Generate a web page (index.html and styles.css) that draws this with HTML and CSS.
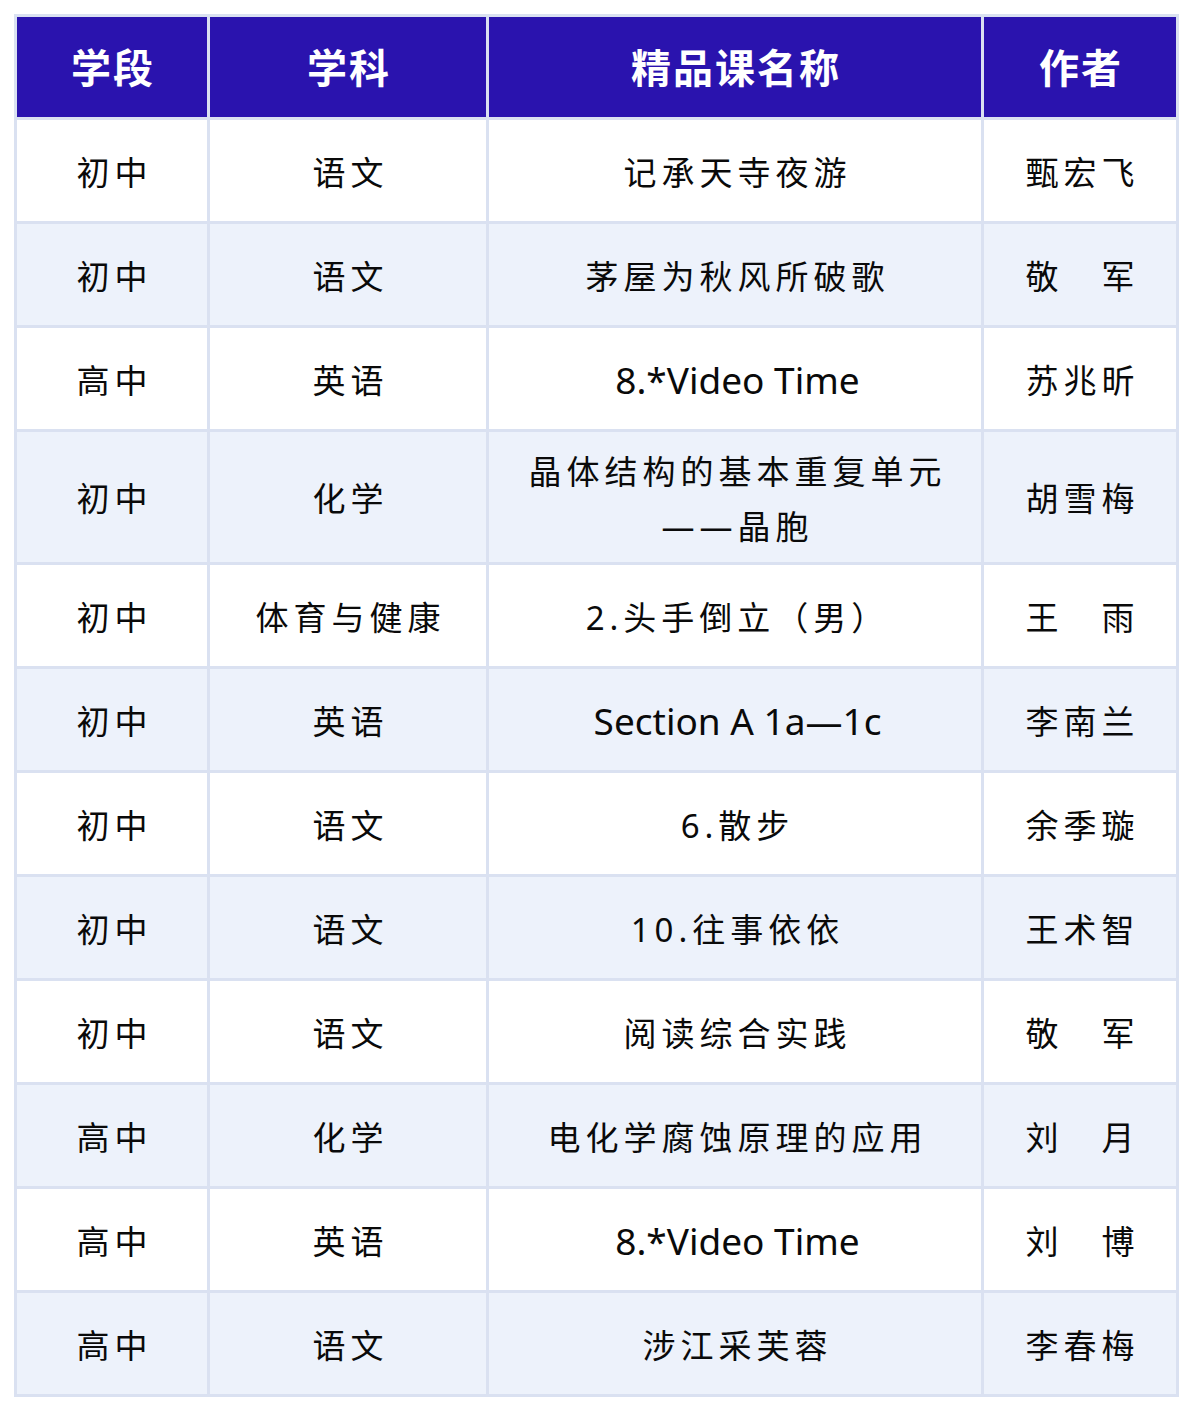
FILE: index.html
```html
<!DOCTYPE html>
<html lang="zh-CN">
<head>
<meta charset="utf-8">
<title>精品课名单</title>
<link rel="stylesheet" href="styles.css">
</head>
<body>
<table class="courses">
  <colgroup>
    <col class="c1"><col class="c2"><col class="c3"><col class="c4">
  </colgroup>
  <thead>
    <tr><th>学段</th><th>学科</th><th>精品课名称</th><th>作者</th></tr>
  </thead>
  <tbody>
    <tr><td>初中</td><td>语文</td><td>记承天寺夜游</td><td>甄宏飞</td></tr>
    <tr class="alt"><td>初中</td><td>语文</td><td>茅屋为秋风所破歌</td><td>敬　军</td></tr>
    <tr><td>高中</td><td>英语</td><td><span class="lat">8.*Video Time</span></td><td>苏兆昕</td></tr>
    <tr class="alt tall"><td>初中</td><td>化学</td><td>晶体结构的基本重复单元<br>——晶胞</td><td>胡雪梅</td></tr>
    <tr><td>初中</td><td>体育与健康</td><td>2.头手倒立（男）</td><td>王　雨</td></tr>
    <tr class="alt"><td>初中</td><td>英语</td><td><span class="lat">Section A 1a—1c</span></td><td>李南兰</td></tr>
    <tr><td>初中</td><td>语文</td><td>6.散步</td><td>余季璇</td></tr>
    <tr class="alt"><td>初中</td><td>语文</td><td>10.往事依依</td><td>王术智</td></tr>
    <tr><td>初中</td><td>语文</td><td>阅读综合实践</td><td>敬　军</td></tr>
    <tr class="alt"><td>高中</td><td>化学</td><td>电化学腐蚀原理的应用</td><td>刘　月</td></tr>
    <tr><td>高中</td><td>英语</td><td><span class="lat">8.*Video Time</span></td><td>刘　博</td></tr>
    <tr class="alt"><td>高中</td><td>语文</td><td>涉江采芙蓉</td><td>李春梅</td></tr>
  </tbody>
</table>
</body>
</html>
```
FILE: styles.css
```css
html, body {
  margin: 0;
  padding: 0;
  background: #ffffff;
}
body {
  padding: 14px 0 0 14px;
  font-family: "Noto Sans", "Noto Sans CJK SC", sans-serif;
}
.courses {
  border-collapse: separate;
  border-spacing: 3px;
  background: #dae1f1;
  table-layout: fixed;
  width: 1165px;
}
.c1 { width: 190px; }
.c2 { width: 276px; }
.c3 { width: 492px; }
.c4 { width: 192px; }
.courses th {
  background: #2a13ae;
  color: #ffffff;
  font-size: 40px;
  font-weight: 700;
  letter-spacing: 2px;
  height: 97px;
  padding: 0 0 3px 2px;
  text-align: center;
  vertical-align: middle;
}
.courses td {
  background: #ffffff;
  color: #0a0a0a;
  font-size: 33px;
  letter-spacing: 5px;
  line-height: 55px;
  height: 98px;
  padding: 3px 0 0 5px;
  text-align: center;
  vertical-align: middle;
}
.courses tr.alt td {
  background: #edf2fb;
}
.courses tr.tall td {
  height: 127px;
}
.lat {
  font-size: 37px;
  letter-spacing: 0;
}
```
